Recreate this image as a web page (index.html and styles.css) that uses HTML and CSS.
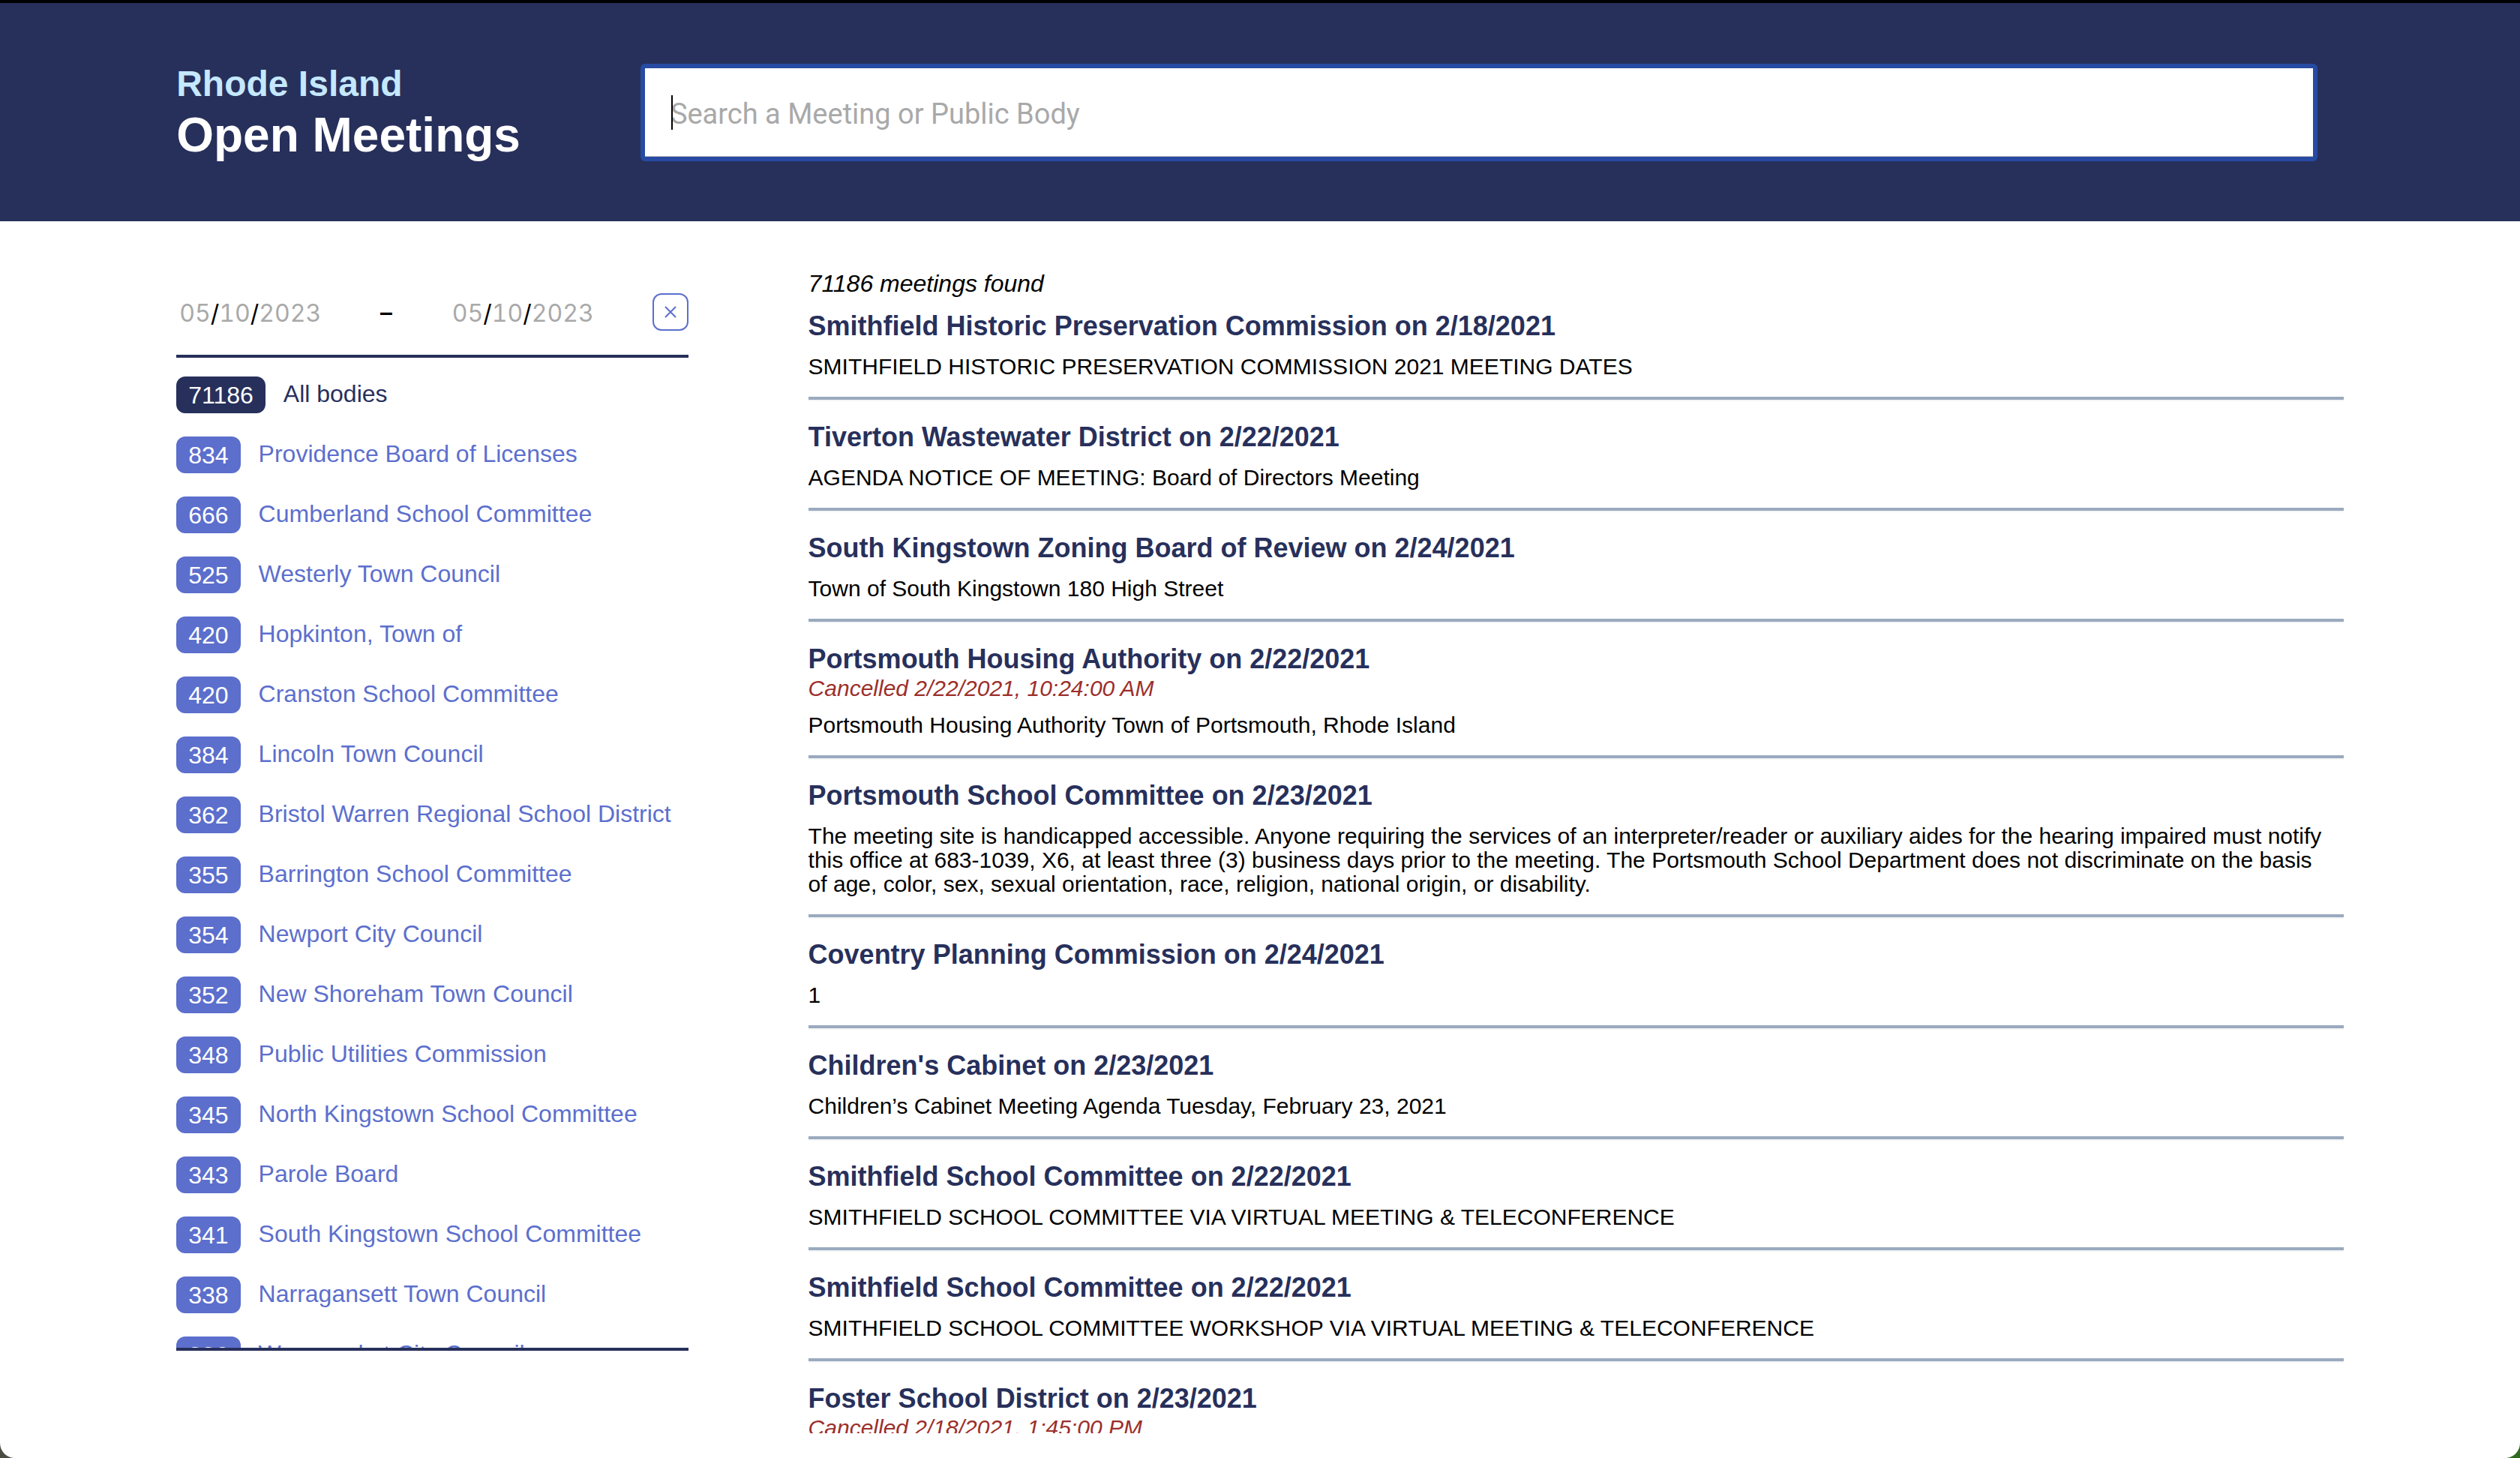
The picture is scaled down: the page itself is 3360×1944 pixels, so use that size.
FILE: index.html
```html
<!DOCTYPE html>
<html lang="en">
<head>
<meta charset="utf-8">
<title>Rhode Island Open Meetings</title>
<link rel="stylesheet" href="styles.css">
</head>
<body>
<div class="page">
  <header class="header">
    <h1 class="brand"><span class="brand-state">Rhode Island</span><span class="brand-name">Open Meetings</span></h1>
    <form class="search">
      <input class="search-input" type="text" placeholder="Search a Meeting or Public Body" aria-label="Search a Meeting or Public Body">
      <span class="search-caret"></span>
    </form>
  </header>
  <div class="content">
    <aside class="sidebar">
      <div class="dates">
        <input class="date" type="date" value="2023-05-10" aria-label="Start date">
        <span class="dash">–</span>
        <input class="date" type="date" value="2023-05-10" aria-label="End date">
        <button class="clear" type="button" aria-label="Clear dates"><svg class="clear-icon" viewBox="0 0 16 16"><path d="M1 1L15 15M15 1L1 15"/></svg></button>
      </div>
      <ul class="bodies">
        <li><a class="body-link selected" href="#"><span class="count">71186</span><span class="name">All bodies</span></a></li>
        <li><a class="body-link" href="#"><span class="count">834</span><span class="name">Providence Board of Licenses</span></a></li>
        <li><a class="body-link" href="#"><span class="count">666</span><span class="name">Cumberland School Committee</span></a></li>
        <li><a class="body-link" href="#"><span class="count">525</span><span class="name">Westerly Town Council</span></a></li>
        <li><a class="body-link" href="#"><span class="count">420</span><span class="name">Hopkinton, Town of</span></a></li>
        <li><a class="body-link" href="#"><span class="count">420</span><span class="name">Cranston School Committee</span></a></li>
        <li><a class="body-link" href="#"><span class="count">384</span><span class="name">Lincoln Town Council</span></a></li>
        <li><a class="body-link" href="#"><span class="count">362</span><span class="name">Bristol Warren Regional School District</span></a></li>
        <li><a class="body-link" href="#"><span class="count">355</span><span class="name">Barrington School Committee</span></a></li>
        <li><a class="body-link" href="#"><span class="count">354</span><span class="name">Newport City Council</span></a></li>
        <li><a class="body-link" href="#"><span class="count">352</span><span class="name">New Shoreham Town Council</span></a></li>
        <li><a class="body-link" href="#"><span class="count">348</span><span class="name">Public Utilities Commission</span></a></li>
        <li><a class="body-link" href="#"><span class="count">345</span><span class="name">North Kingstown School Committee</span></a></li>
        <li><a class="body-link" href="#"><span class="count">343</span><span class="name">Parole Board</span></a></li>
        <li><a class="body-link" href="#"><span class="count">341</span><span class="name">South Kingstown School Committee</span></a></li>
        <li><a class="body-link" href="#"><span class="count">338</span><span class="name">Narragansett Town Council</span></a></li>
        <li><a class="body-link" href="#"><span class="count">336</span><span class="name">Woonsocket City Council</span></a></li>
      </ul>
    </aside>
    <main class="results">
      <p class="found">71186 meetings found</p>
      <article class="meeting">
        <h2 class="title">Smithfield Historic Preservation Commission on 2/18/2021</h2>
        <p class="text">SMITHFIELD HISTORIC PRESERVATION COMMISSION 2021 MEETING DATES</p>
      </article>
      <article class="meeting">
        <h2 class="title">Tiverton Wastewater District on 2/22/2021</h2>
        <p class="text">AGENDA NOTICE OF MEETING: Board of Directors Meeting</p>
      </article>
      <article class="meeting">
        <h2 class="title">South Kingstown Zoning Board of Review on 2/24/2021</h2>
        <p class="text">Town of South Kingstown 180 High Street</p>
      </article>
      <article class="meeting">
        <h2 class="title">Portsmouth Housing Authority on 2/22/2021</h2>
        <p class="cancelled">Cancelled 2/22/2021, 10:24:00 AM</p>
        <p class="text">Portsmouth Housing Authority Town of Portsmouth, Rhode Island</p>
      </article>
      <article class="meeting">
        <h2 class="title">Portsmouth School Committee on 2/23/2021</h2>
        <p class="text">The meeting site is handicapped accessible. Anyone requiring the services of an interpreter/reader or auxiliary aides for the hearing impaired must notify this office at 683-1039, X6, at least three (3) business days prior to the meeting. The Portsmouth School Department does not discriminate on the basis of age, color, sex, sexual orientation, race, religion, national origin, or disability.</p>
      </article>
      <article class="meeting">
        <h2 class="title">Coventry Planning Commission on 2/24/2021</h2>
        <p class="text">1</p>
      </article>
      <article class="meeting">
        <h2 class="title">Children's Cabinet on 2/23/2021</h2>
        <p class="text">Children’s Cabinet Meeting Agenda Tuesday, February 23, 2021</p>
      </article>
      <article class="meeting">
        <h2 class="title">Smithfield School Committee on 2/22/2021</h2>
        <p class="text">SMITHFIELD SCHOOL COMMITTEE VIA VIRTUAL MEETING &amp; TELECONFERENCE</p>
      </article>
      <article class="meeting">
        <h2 class="title">Smithfield School Committee on 2/22/2021</h2>
        <p class="text">SMITHFIELD SCHOOL COMMITTEE WORKSHOP VIA VIRTUAL MEETING &amp; TELECONFERENCE</p>
      </article>
      <article class="meeting">
        <h2 class="title">Foster School District on 2/23/2021</h2>
        <p class="cancelled">Cancelled 2/18/2021, 1:45:00 PM</p>
      </article>
    </main>
  </div>
</div>
</body>
</html>
```
FILE: styles.css
```css
* {
  box-sizing: border-box;
}

html {
  background: linear-gradient(90deg, #4a4d44 50%, #2f6a20 50%);
}

body {
  margin: 0;
  font-family: "Liberation Sans", Arial, sans-serif;
  font-size: 32px;
  color: #000;
}

h1, h2, p, ul {
  margin: 0;
  padding: 0;
}

.page {
  display: flex;
  flex-direction: column;
  height: 100vh;
  overflow: hidden;
  background: #fff;
  border-radius: 0 0 20px 20px;
}

.header {
  display: flex;
  align-items: center;
  gap: 160px;
  padding: 81px 270px 80px 7%;
  background: #27305b;
  border-top: 4px solid #000;
}

.brand {
  display: flex;
  flex-direction: column;
  gap: 6px;
  font-weight: 700;
  white-space: nowrap;
}

.brand-state {
  font-size: 48px;
  line-height: 54px;
  color: #c5e8ff;
}

.brand-name {
  font-size: 64px;
  line-height: 70px;
  color: #fff;
}

.search {
  position: relative;
  flex: 1;
}

.search-input {
  display: block;
  width: 100%;
  height: 130px;
  padding: 4px 34px 0;
  border: 6px solid #274ba3;
  border-radius: 6px;
  background: #fff;
  box-shadow: inset 0 -1px #bbb;
  font-family: Roboto, sans-serif;
  font-size: 38px;
  color: #000;
  outline: none;
}

.search-input::placeholder {
  color: #a9a9a9;
}

.search-caret {
  position: absolute;
  top: 42px;
  left: 41px;
  width: 2px;
  height: 46px;
  background: #000;
}

.content {
  display: grid;
  grid-template-columns: minmax(0, 1fr) minmax(0, 3fr);
  grid-template-rows: minmax(0, 1fr);
  gap: 160px;
  flex: 1;
  min-height: 0;
  padding: 65px 7% 33px;
}

.sidebar {
  display: flex;
  flex-direction: column;
  min-height: 0;
  padding: 31px 0 110px;
}

.dates {
  display: flex;
  align-items: center;
  justify-content: space-between;
  padding-bottom: 32px;
  border-bottom: 4px solid #27305b;
}

.date {
  width: 196px;
  height: 50px;
  padding: 2px 0 0 4px;
  border: 0;
  background: none;
  font-family: Inter, sans-serif;
  font-size: 32px;
  font-variant-numeric: tabular-nums;
  color: #000;
}

.date::-webkit-calendar-picker-indicator {
  display: none;
}

.date::-webkit-datetime-edit-month-field,
.date::-webkit-datetime-edit-day-field,
.date::-webkit-datetime-edit-year-field {
  padding: 0;
  color: #a9a9a9;
}

.dash {
  font-weight: 700;
}

.clear {
  display: flex;
  align-items: center;
  justify-content: center;
  width: 48px;
  height: 50px;
  padding: 0;
  border: 2px solid #5c6fcd;
  border-radius: 12px;
  background: #fff;
}

.clear-icon {
  width: 16px;
  height: 16px;
  fill: none;
  stroke: #5c6fcd;
  stroke-width: 2;
}

.bodies {
  flex: 1;
  min-height: 0;
  overflow: hidden;
  padding-top: 25px;
  border-bottom: 4px solid #27305b;
  list-style: none;
}

.body-link {
  display: flex;
  align-items: flex-start;
  gap: 24px;
  height: 80px;
  color: #5c6fcd;
  text-decoration: none;
  white-space: nowrap;
}

.count {
  padding: 1px 16px 0;
  border-radius: 12px;
  background: #5c6fcd;
  line-height: 48px;
  color: #fff;
}

.name {
  line-height: 47px;
}

.selected {
  color: #27305b;
}

.selected .count {
  background: #27305b;
}

.results {
  min-height: 0;
  overflow: hidden;
}

.found {
  margin-bottom: 17px;
  font-style: italic;
  line-height: 36px;
}

.meeting {
  margin-bottom: 26px;
  border-bottom: 2px solid #f4f5f7;
}

.meeting::after {
  content: "";
  display: block;
  height: 4px;
  margin-top: 24px;
  background: #9aaabf;
}

.title {
  font-size: 36px;
  line-height: 44px;
  color: #27305b;
}

.cancelled {
  font-size: 30px;
  font-style: italic;
  line-height: 34px;
  color: #9c2f2b;
}

.text {
  margin-top: 16px;
  padding-right: 12px;
  font-size: 30px;
  line-height: 32px;
}
```
